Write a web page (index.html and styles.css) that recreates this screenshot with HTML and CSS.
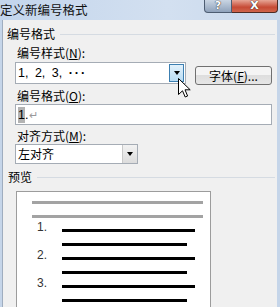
FILE: index.html
```html
<!DOCTYPE html>
<html lang="zh">
<head>
    <meta charset="UTF-8">
    <title>定义新编号格式</title>
    <link rel="stylesheet" href="styles.css">
</head>
<body>
    <div class="window">
        <!-- Title bar -->
        <div class="titlebar">
            <span class="title">定义新编号格式</span>
            <div class="caption-btns">
                <span class="cap-btn cap-help">?</span>
                <span class="cap-btn cap-close">X</span>
            </div>
        </div>

        <div class="client">
            <!-- Number format group -->
            <div class="group-head"><span>编号格式</span><i class="group-line"></i></div>

            <div class="label">编号样式(<u>N</u>):</div>
            <div class="row">
                <div class="combo combo-style">
                    <span class="combo-text latin spaced">1, 2, 3, <span class="dots">···</span></span>
                    <span class="drop hover"><i class="arrow"></i></span>
                </div>
                <button class="btn">字体(<u>F</u>)...</button>
            </div>

            <div class="label">编号格式(<u>O</u>):</div>
            <div class="textbox latin"><span class="sel">1</span>.<span class="para">↵</span></div>

            <div class="label">对齐方式(<u>M</u>):</div>
            <div class="combo combo-align">
                <span class="combo-text">左对齐</span>
                <span class="drop"><i class="arrow"></i></span>
            </div>

            <!-- Preview group -->
            <div class="group-head preview-head"><span>预览</span><i class="group-line"></i></div>

            <div class="preview">
                <div class="pv-gray"></div>
                <div class="pv-gray"></div>
                <div class="pv-item">
                    <span class="pv-num">1.</span>
                    <div class="pv-lines"><i class="pv-long"></i><i class="pv-short"></i></div>
                </div>
                <div class="pv-item">
                    <span class="pv-num">2.</span>
                    <div class="pv-lines"><i class="pv-long"></i><i class="pv-short"></i></div>
                </div>
                <div class="pv-item">
                    <span class="pv-num">3.</span>
                    <div class="pv-lines"><i class="pv-long"></i><i class="pv-short"></i></div>
                </div>
            </div>
        </div>

        <!-- Mouse pointer over the dropdown -->
        <svg class="cursor" width="13" height="20" viewBox="0 0 13 20">
            <path d="M0.5 0.5 L0.5 16.5 L4.5 12.8 L7.2 19 L9.6 18 L7 11.8 L12.2 11.8 Z" fill="#fff" stroke="#000" stroke-width="1" stroke-linejoin="round"/>
        </svg>
    </div>
</body>
</html>
```

FILE: styles.css
```css
/* Base */
* {
    box-sizing: border-box;
}

body {
    margin: 0;
    font-family: "Noto Sans CJK SC", "Liberation Sans", sans-serif;
    font-size: 12px;
    color: #000;
    overflow: hidden;
}

.window {
    position: relative;
    width: 280px;
    height: 307px;
    background: #c5d5e9;
    overflow: hidden;
}

.latin {
    font-family: "Liberation Sans", sans-serif;
    font-size: 12.5px;
}

.spaced {
    word-spacing: 3px;
}

/* Title bar */
.titlebar {
    display: flex;
    align-items: flex-start;
    height: 20px;
    background: linear-gradient(to right, #c3d5ec, #d3e0f0 60%, #c8d8ec);
}

.title {
    font-size: 12.5px;
    line-height: 19px;
    color: #111;
}

.caption-btns {
    display: flex;
    margin-left: auto;
    margin-right: 2px;
}

.cap-btn {
    height: 13px;
    color: #fff;
    font-family: "DejaVu Sans", sans-serif;
    font-weight: bold;
    font-size: 11px;
    line-height: 11px;
    text-align: center;
    text-shadow: 0 0 1px #333, 0 0 1px #333;
}

.cap-help {
    width: 28px;
    background: linear-gradient(#c9d5e3, #8fa2bb);
    border: 1px solid #4d5d72;
    border-top: none;
    border-radius: 0 0 0 4px;
}

.cap-close {
    width: 46px;
    background: linear-gradient(#e7a696, #c64a35 60%, #d0654c);
    border: 1px solid #4e2b24;
    border-top: none;
    border-left: none;
    border-radius: 0 0 4px 0;
}

/* Client area */
.client {
    height: 287px;
    margin: 0 3px 0 2px;
    padding-top: 6px;
    background: #f0f0f0;
    border-left: 1px solid #9fadbf;
}

.group-head {
    display: flex;
    align-items: center;
    height: 16px;
    padding-left: 4px;
    line-height: 16px;
}

.group-line {
    flex: 1;
    height: 1px;
    margin: 1px 2px 0 5px;
    background: #d5dbe2;
}

.label {
    height: 16px;
    margin-top: 3px;
    padding-left: 14px;
    line-height: 16px;
}

.label:first-of-type {
    margin-top: 0;
}

.row {
    display: flex;
    align-items: flex-start;
    margin-top: 1px;
}

/* Combos and text boxes */
.combo,
.textbox {
    display: flex;
    align-items: center;
    margin-left: 12px;
    background: #fff;
    border: 1px solid #a5acb5;
}

.combo-style {
    width: 171px;
    height: 22px;
}

.combo-align {
    width: 123px;
    height: 20px;
}

.combo-text {
    flex: 1;
    padding-left: 2px;
    line-height: 16px;
}

.dots {
    letter-spacing: 2px;
    font-weight: bold;
}

.drop {
    display: flex;
    align-items: center;
    justify-content: center;
    width: 15px;
    height: 100%;
    background: linear-gradient(#f2f2f2, #dcdcdc);
    border-left: 1px solid #c9c9c9;
}

.drop.hover {
    height: calc(100% - 2px);
    margin-right: 1px;
    background: linear-gradient(#e2f1fb, #b9dcf3);
    border: 1px solid #3c7fb1;
}

.arrow {
    width: 0;
    height: 0;
    border-left: 3.5px solid transparent;
    border-right: 3.5px solid transparent;
    border-top: 4px solid #000;
}

.btn {
    width: 77px;
    height: 19px;
    margin-top: 4px;
    margin-left: 9px;
    padding: 0;
    font-family: inherit;
    font-size: 12px;
    line-height: 16px;
    color: #000;
    background: linear-gradient(#f4f4f4 50%, #dedede 50%, #e6e6e6);
    border: 1px solid #707070;
    border-radius: 3px;
}

.textbox {
    width: 257px;
    height: 21px;
    padding-left: 2px;
    line-height: 16px;
}

.sel {
    background: #b3b3b3;
}

.para {
    margin-left: 1px;
    color: #9a9a9a;
    font-size: 11px;
}

/* Preview */
.preview-head {
    margin-top: 5px;
    padding-left: 5px;
}

.preview {
    display: flex;
    flex-direction: column;
    gap: 11px;
    width: 195px;
    height: 140px;
    margin: 6px 0 0 13px;
    padding-top: 9px;
    background: #fff;
    border: 1px solid #9c9c9c;
}

.pv-gray {
    width: 171px;
    height: 3px;
    margin-left: 15px;
    background: #a3a3a3;
}

.pv-item {
    display: flex;
    align-items: flex-start;
}

.pv-num {
    width: 45px;
    height: 12px;
    margin-top: -8px;
    padding-left: 20px;
    font-family: "Liberation Sans", sans-serif;
    font-size: 12px;
    line-height: 12px;
    color: #333;
}

.pv-lines {
    display: flex;
    flex-direction: column;
    gap: 11px;
}

.pv-lines i {
    display: block;
    height: 3px;
    background: #000;
}

.pv-long {
    width: 133px;
}

.pv-short {
    width: 125px;
}

/* Pointer overlay */
.cursor {
    position: absolute;
    left: 178px;
    top: 78px;
}
```
